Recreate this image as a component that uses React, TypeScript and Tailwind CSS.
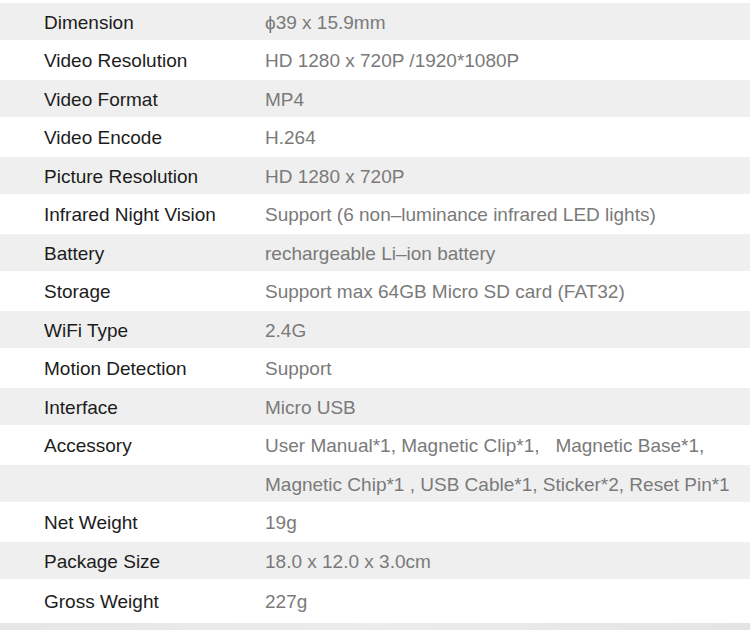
import React from 'react';

type Spec = { label: string; value: string };

const specs: Spec[] = [
  { label: 'Dimension', value: 'ϕ39 x 15.9mm' },
  { label: 'Video Resolution', value: 'HD 1280 x 720P /1920*1080P' },
  { label: 'Video Format', value: 'MP4' },
  { label: 'Video Encode', value: 'H.264' },
  { label: 'Picture Resolution', value: 'HD 1280 x 720P' },
  { label: 'Infrared Night Vision', value: 'Support (6 non–luminance infrared LED lights)' },
  { label: 'Battery', value: 'rechargeable Li–ion battery' },
  { label: 'Storage', value: 'Support max 64GB Micro SD card (FAT32)' },
  { label: 'WiFi Type', value: '2.4G' },
  { label: 'Motion Detection', value: 'Support' },
  { label: 'Interface', value: 'Micro USB' },
  { label: 'Accessory', value: 'User Manual*1, Magnetic Clip*1,   Magnetic Base*1,' },
  { label: '', value: 'Magnetic Chip*1 , USB Cable*1, Sticker*2, Reset Pin*1' },
  { label: 'Net Weight', value: '19g' },
  { label: 'Package Size', value: '18.0 x 12.0 x 3.0cm' },
  { label: 'Gross Weight', value: '227g' },
];

const App: React.FC = () => {
  return (
    <div
      className="w-[750px] h-[630px] bg-white overflow-hidden pt-[3px] flex flex-col"
      style={{ fontFamily: '"Liberation Sans", Arial, sans-serif' }}
    >
      {specs.map((row, i) => {
        const gray = i % 2 === 0;
        const last = i === specs.length - 1;
        return (
          <div
            key={i}
            className={`flex items-center shrink-0 pt-[2px] ${
              gray ? 'bg-[#efefef] h-[37px]' : last ? 'bg-white h-[44px]' : 'bg-white h-[40px]'
            }`}
          >
            <div className="w-[265px] pl-[44px] text-[19px] leading-[22px] text-[#1c1c1c] shrink-0">
              {row.label}
            </div>
            <div className="text-[19px] leading-[22px] text-[#7a7a7a] whitespace-pre">{row.value}</div>
          </div>
        );
      })}
      {/* bottom edge */}
      <div className="flex-1 bg-gradient-to-r from-[#e6e6e6] via-[#ececec] to-[#e4e4e4]" />
    </div>
  );
};

export default App;
